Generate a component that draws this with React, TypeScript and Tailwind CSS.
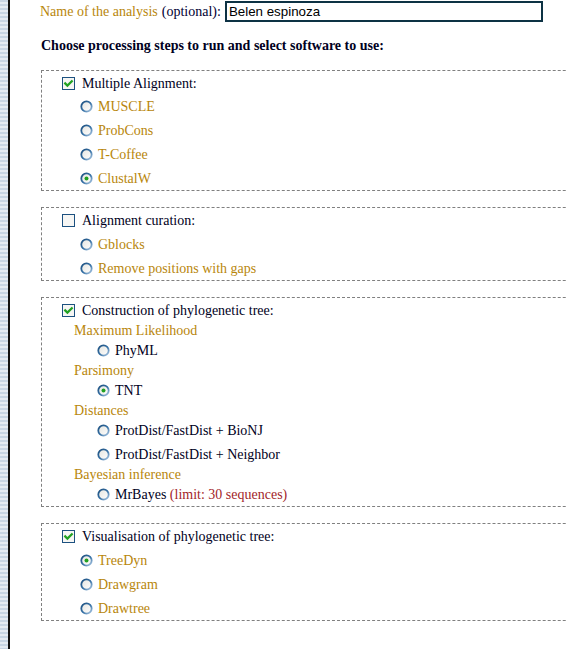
import React from "react";

const Radio = ({ checked = false }: { checked?: boolean }) => (
    <svg width="13" height="13" viewBox="0 0 13 13" className="shrink-0">
        <defs>
            <linearGradient id="ring" x1="0" y1="0" x2="1" y2="1">
                <stop offset="0" stopColor="#1b4e7e" />
                <stop offset="0.55" stopColor="#3a74a8" />
                <stop offset="1" stopColor="#b3cde6" />
            </linearGradient>
            <linearGradient id="fill" x1="0" y1="0" x2="1" y2="1">
                <stop offset="0" stopColor="#e4e4df" />
                <stop offset="1" stopColor="#ffffff" />
            </linearGradient>
        </defs>
        <circle cx="6.5" cy="6.5" r="5.2" fill="url(#fill)" stroke="url(#ring)" strokeWidth="1.8" />
        {checked && <circle cx="6.5" cy="6.5" r="2" fill="#21a121" />}
    </svg>
);

const Check = ({ checked = false }: { checked?: boolean }) => (
    <svg width="13" height="13" viewBox="0 0 13 13" className="shrink-0">
        <rect x="0.5" y="0.5" width="12" height="12" fill="#f6f6f4" stroke="#1c5180" />
        {checked && (
            <path d="M3.2 6.4 L5.4 8.6 L9.8 4.2" fill="none" stroke="#21a121" strokeWidth="2.2" strokeLinecap="square" />
        )}
    </svg>
);

const Step = ({ checked, label, h = "h-[23px]" }: { checked: boolean; label: string; h?: string }) => (
    <div className={`${h} pt-[2px] flex items-center pl-[20px] text-[#000022]`}>
        <Check checked={checked} />
        <span className="ml-[7px]">{label}</span>
    </div>
);

const Opt = ({ checked = false, label }: { checked?: boolean; label: string }) => (
    <div className="h-[24px] pt-[2px] flex items-center pl-[38px] text-[#b8860b]">
        <Radio checked={checked} />
        <span className="ml-[5px]">{label}</span>
    </div>
);

const Group = ({ label }: { label: string }) => (
    <div className="h-[18px] pt-[2px] flex items-center pl-[32px] text-[#b8860b]">{label}</div>
);

const Prog = ({ checked = false, children, className = "" }: { checked?: boolean; children: React.ReactNode; className?: string }) => (
    <div className={`h-[22px] pt-[2px] flex items-center pl-[55px] text-[#000022] ${className}`}>
        <Radio checked={checked} />
        <span className="ml-[5px]">{children}</span>
    </div>
);

const Box = ({ children, className = "" }: { children: React.ReactNode; className?: string }) => (
    <div className={`mt-[16px] w-[600px] border border-dashed border-[#808080] ${className}`}>{children}</div>
);

export default function App() {
    return (
        <div className="w-[566px] h-[649px] overflow-hidden bg-white flex font-['Liberation_Serif',serif] text-[14px]">
            <div className="shrink-0 w-[8px] h-full bg-[repeating-linear-gradient(to_bottom,#c7d5e4_0px,#c7d5e4_2px,#e4ebf3_2px,#e4ebf3_4px)]" />
            <div className="shrink-0 w-[2px] h-full bg-[#101010]" />
            <div className="flex-1 min-w-0 pl-[30px]">
                <div className="h-[22px] flex items-center">
                    <span className="text-[#b8860b]">Name of the analysis</span>
                    <span className="ml-[4px] text-[#000033]">(optional):</span>
                    <input
                        readOnly
                        value="Belen espinoza"
                        className="ml-[4px] w-[318px] h-[21px] border-2 border-[#0d3244] px-[2px] font-['Liberation_Sans',sans-serif] text-[13.33px] text-black outline-none"
                    />
                </div>

                <h3 className="mt-[16px] ml-[1px] h-[16px] leading-[16px] font-bold text-[#000022]">
                    Choose processing steps to run and select software to use:
                </h3>

                <div className="ml-[1px]">
                    <Box className="pb-[1px]">
                        <Step checked label="Multiple Alignment:" h="h-[22px]" />
                        <Opt label="MUSCLE" />
                        <Opt label="ProbCons" />
                        <Opt label="T-Coffee" />
                        <Opt checked label="ClustalW" />
                    </Box>

                    <Box className="pb-[1px]">
                        <Step checked={false} label="Alignment curation:" />
                        <Opt label="Gblocks" />
                        <Opt label="Remove positions with gaps" />
                    </Box>

                    <Box className="pb-[2px]">
                        <Step checked label="Construction of phylogenetic tree:" h="h-[22px]" />
                        <Group label="Maximum Likelihood" />
                        <Prog>PhyML</Prog>
                        <Group label="Parsimony" />
                        <Prog checked>TNT</Prog>
                        <Group label="Distances" />
                        <Prog>ProtDist/FastDist + BioNJ</Prog>
                        <Prog className="mt-[2px]">ProtDist/FastDist + Neighbor</Prog>
                        <Group label="Bayesian inference" />
                        <Prog>
                            MrBayes <span className="text-[#a31f2a]">(limit: 30 sequences)</span>
                        </Prog>
                    </Box>

                    <Box className="pb-[1px]">
                        <Step checked label="Visualisation of phylogenetic tree:" />
                        <Opt checked label="TreeDyn" />
                        <Opt label="Drawgram" />
                        <Opt label="Drawtree" />
                    </Box>
                </div>
            </div>
        </div>
    );
}
